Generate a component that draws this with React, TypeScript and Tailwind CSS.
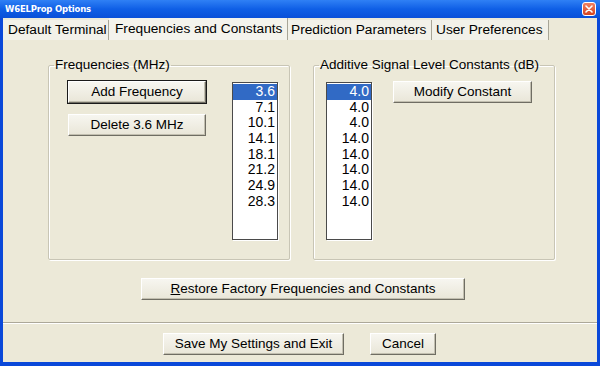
import type { ReactNode } from 'react';

const frequencies = ['3.6', '7.1', '10.1', '14.1', '18.1', '21.2', '24.9', '28.3'];
const constants = ['4.0', '4.0', '4.0', '14.0', '14.0', '14.0', '14.0', '14.0'];

const tabs = [
  { label: 'Default Terminal', width: 'w-[106px]', pad: 'pl-[5px]' },
  { label: 'Frequencies and Constants', width: 'w-[179px]', pad: 'pl-[6px]', active: true },
  { label: 'Prediction Parameters', width: 'w-[144px]', pad: 'pl-[3px]' },
  { label: 'User Preferences', width: 'w-[117px]', pad: 'pl-[4px]' },
];

function Button({ children, width, isDefault }: { children: ReactNode; width: string; isDefault?: boolean }) {
  return (
    <div
      className={`${width} h-[22px] flex items-center justify-center bg-gradient-to-b from-[#f7f6f0] to-[#e9e6d8] border border-t-white border-l-white border-r-[#6f6d63] border-b-[#6f6d63] shadow-[inset_-1px_-1px_0_#c2bfb0] ${
        isDefault ? 'outline outline-1 outline-[#1a1a1a]' : ''
      }`}
    >
      <span className="leading-none">{children}</span>
    </div>
  );
}

function ListBox({ items }: { items: string[] }) {
  return (
    <div className="w-[46px] h-[158px] bg-white border border-[#4a4a4a] shadow-[1px_1px_0_#ffffff] pt-[1px] text-[14px]">
      {items.map((v, i) => (
        <div
          key={i}
          className={`h-[15.7px] leading-[15.7px] text-right pr-[2px] ${
            i === 0 ? 'bg-[#316ac5] text-white' : ''
          }`}
        >
          {v}
        </div>
      ))}
    </div>
  );
}

function Group({ legend, children }: { legend: string; children: ReactNode }) {
  return (
    <fieldset className="w-[242px] h-[203px] border border-[#c8c5b5] shadow-[inset_1px_1px_0_#ffffff,1px_1px_0_#ffffff] rounded-[2px]">
      <legend className="ml-[5px] px-[1px] leading-[16px]">{legend}</legend>
      {children}
    </fieldset>
  );
}

export default function App() {
  return (
    <div className="w-[600px] h-[366px] bg-[#0a48d9] flex flex-col font-['Liberation_Sans',Arial,sans-serif] text-[13.5px] text-black overflow-hidden">
      {/* Title bar */}
      <div className="h-[18px] flex items-center justify-between bg-gradient-to-b from-[#2f80f5] via-[#0f5fe6] to-[#0a50d8] pl-[5px] pr-[4px]">
        <span className="text-white font-bold text-[8.5px] leading-none font-['DejaVu_Sans',sans-serif] tracking-[-0.2px]">
          W6ELProp Options
        </span>
        <div className="w-[14px] h-[14px] rounded-[3px] border border-white bg-gradient-to-b from-[#f08060] to-[#d6431c] flex items-center justify-center">
          <svg width="8" height="8" viewBox="0 0 8 8">
            <path d="M1 1 L7 7 M7 1 L1 7" stroke="#fff" strokeWidth="1.6" strokeLinecap="round" />
          </svg>
        </div>
      </div>

      {/* Window body */}
      <div className="flex-1 mx-[3px] mb-[4px] bg-[#ece9d8] flex flex-col">
        {/* Tabs */}
        <div className="h-[22px] flex items-end">
          {tabs.map((t) => (
            <div
              key={t.label}
              className={`${t.width} ${t.pad} flex items-center whitespace-nowrap border-r border-r-[#a8a597] text-[13.7px] ${
                t.active ? 'h-[22px] bg-[#f4f3ec]' : 'h-[20px] bg-[#f2f1e9]'
              }`}
            >
              {t.label}
            </div>
          ))}
        </div>

        {/* Groups */}
        <div className="flex gap-[23px] ml-[45px] mt-[17px]">
          <Group legend="Frequencies (MHz)">
            <div className="flex">
              <div className="flex flex-col gap-[11px] ml-[19px] mt-[8px]">
                <Button width="w-[138px]" isDefault>
                  Add Frequency
                </Button>
                <Button width="w-[138px]">Delete 3.6 MHz</Button>
              </div>
              <div className="ml-[26px] mt-[9px]">
                <ListBox items={frequencies} />
              </div>
            </div>
          </Group>
          <Group legend="Additive Signal Level Constants (dB)">
            <div className="flex">
              <div className="ml-[12px] mt-[9px]">
                <ListBox items={constants} />
              </div>
              <div className="ml-[21px] mt-[8px]">
                <Button width="w-[139px]">Modify Constant</Button>
              </div>
            </div>
          </Group>
        </div>

        {/* Restore */}
        <div className="ml-[138px] mt-[18px]">
          <Button width="w-[324px]">
            <span className="underline">R</span>estore Factory Frequencies and Constants
          </Button>
        </div>

        {/* Separator */}
        <div className="mt-[22px] h-[2px] border-t border-t-[#aca899] border-b border-b-white" />

        {/* Bottom buttons */}
        <div className="flex gap-[26px] ml-[160px] mt-[9px]">
          <Button width="w-[181px]">Save My Settings and Exit</Button>
          <Button width="w-[66px]">Cancel</Button>
        </div>
      </div>
    </div>
  );
}
